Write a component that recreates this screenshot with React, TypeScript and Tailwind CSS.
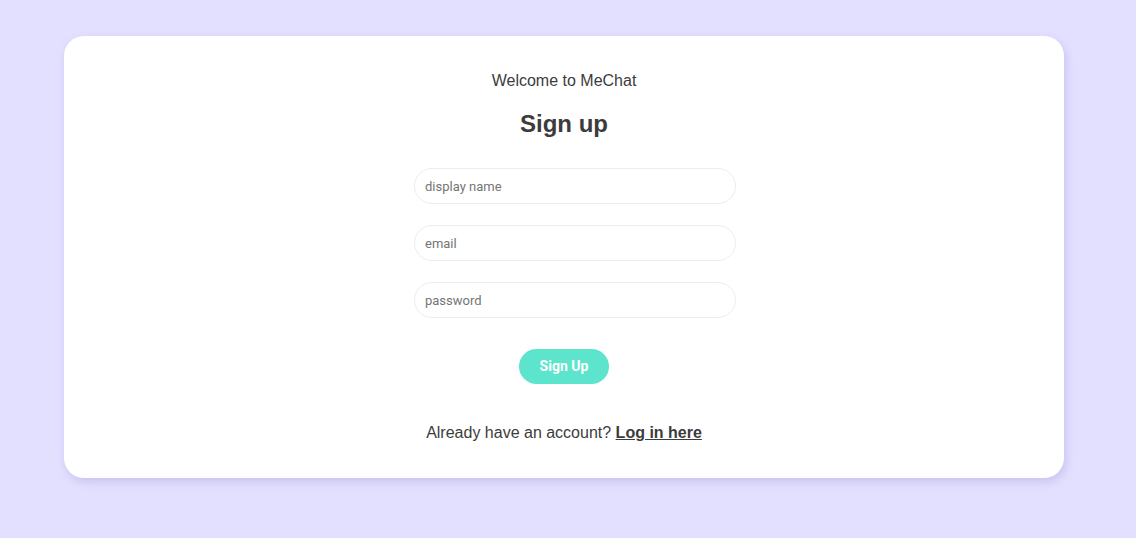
export default function App() {
  const fields = ['display name', 'email', 'password'];

  return (
    <div className="min-h-[538px] w-full bg-[#e3e0ff] pt-[36px] font-['Liberation_Sans',Arial,sans-serif]">
      <div className="mx-[64px] flex h-[442px] w-[1000px] flex-col items-center rounded-[20px] bg-white pt-[35px] shadow-[2px_4px_10px_rgba(120,110,200,0.25)]">
        <p className="text-[16px] leading-[20px] text-[#3c3c3c]">Welcome to MeChat</p>
        <h1 className="mt-[19px] text-[24px] font-bold leading-[28px] text-[#3c3c3c]">Sign up</h1>

        <form className="mt-[30px] ml-[22px] flex flex-col gap-[21px]" onSubmit={(e) => e.preventDefault()}>
          {fields.map((f) => (
            <input
              key={f}
              type={f === 'password' ? 'password' : 'text'}
              placeholder={f}
              className="h-[36px] w-[322px] rounded-full border border-[#ececec] bg-white px-[10px] font-['Roboto',sans-serif] text-[13px] text-[#333] outline-none placeholder:text-[#757575]"
            />
          ))}
        </form>

        <button className="mt-[31px] h-[35px] w-[90px] rounded-full bg-[#5ce5cc] font-['Roboto',sans-serif] text-[14px] font-bold text-white">
          Sign Up
        </button>

        <p className="mt-[39px] text-[16px] leading-[20px] text-[#3c3c3c]">
          Already have an account?{' '}
          <a href="#" className="font-bold underline">
            Log in here
          </a>
        </p>
      </div>
    </div>
  );
}
